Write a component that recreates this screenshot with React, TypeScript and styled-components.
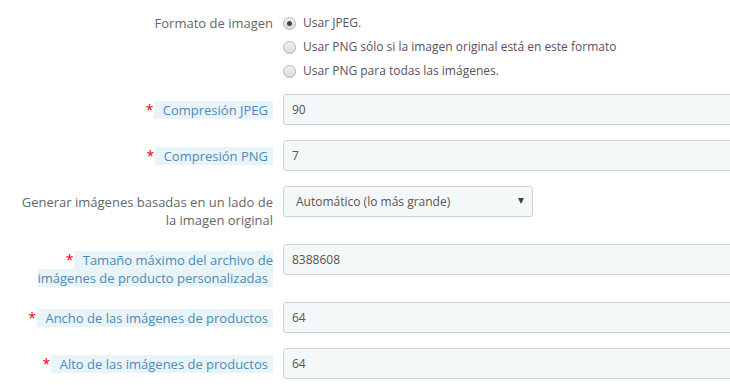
import React from "react";
import styled, { createGlobalStyle } from "styled-components";

const Global = createGlobalStyle`
  html, body { margin: 0; padding: 0; background: #fff; overflow: hidden; }
  body { font-family: "Open Sans", "Liberation Sans", Arial, sans-serif; font-size: 13px; }
  * { box-sizing: border-box; }
`;

const Page = styled.div`
  width: 730px;
  height: 385px;
  padding-top: 7px;
  overflow: hidden;
`;

const FormGroup = styled.div<{ $mb?: number }>`
  display: grid;
  grid-template-columns: 278px 1fr;
  margin-bottom: ${(p) => (p.$mb ?? 15)}px;
`;

const Label = styled.div`
  padding: 7px 5px 0 15px;
  text-align: right;
  line-height: 18px;
  color: #666;
  font-size: 13px;
`;

const Required = styled.span`
  color: #e00;
  font-size: 14px;
  margin-right: 1px;
`;

const Hint = styled.span`
  background: #e9f4f9;
  color: #4a8bba;
  padding: 0 5px;
`;

const Field = styled.div`
  padding-left: 5px;
  min-width: 0;
`;

const Input = styled.input`
  display: block;
  width: 480px;
  height: 31px;
  padding: 0 8px;
  border: 1px solid #c7d6db;
  border-radius: 3px;
  background: #f5f8f9;
  color: #555;
  font-family: inherit;
  font-size: 12px;
  outline: none;
`;

const SelectWrap = styled.div`
  position: relative;
  width: 250px;
`;

const Select = styled.select`
  display: block;
  width: 250px;
  height: 31px;
  padding: 0 24px 0 12px;
  border: 1px solid #c7d6db;
  border-radius: 3px;
  background: #f5f8f9;
  color: #555;
  font-family: inherit;
  font-size: 12px;
  appearance: none;
  -webkit-appearance: none;
  outline: none;
`;

const Caret = styled.span`
  position: absolute;
  right: 9px;
  top: 12px;
  width: 0;
  height: 0;
  border-left: 3.5px solid transparent;
  border-right: 3.5px solid transparent;
  border-top: 6px solid #444;
  pointer-events: none;
`;

const RadioList = styled.div`
  padding-top: 7px;
  display: flex;
  flex-direction: column;
  gap: 6px;
`;

const RadioRow = styled.label`
  display: flex;
  align-items: center;
  height: 18px;
  line-height: 18px;
  color: #5a5060;
  font-size: 12px;
`;

const RadioDot = styled.span<{ $checked?: boolean }>`
  flex: none;
  width: 13px;
  height: 13px;
  border-radius: 50%;
  border: 1px solid #b4b4b4;
  background: linear-gradient(#f2f2f2, #dadada);
  margin-right: 7px;
  display: flex;
  align-items: center;
  justify-content: center;
  &::after {
    content: "";
    display: ${(p) => (p.$checked ? "block" : "none")};
    width: 5px;
    height: 5px;
    border-radius: 50%;
    background: #444;
  }
`;

type Row = { label: string; required?: boolean; value: string };

const textRows: Row[] = [
  { label: "Compresión JPEG", required: true, value: "90" },
  { label: "Compresión PNG", required: true, value: "7" },
];

const lowerRows: Row[] = [
  { label: "Tamaño máximo del archivo de imágenes de producto personalizadas", required: true, value: "8388608" },
  { label: "Ancho de las imágenes de productos", required: true, value: "64" },
  { label: "Alto de las imágenes de productos", required: true, value: "64" },
];

const HintLabel: React.FC<{ text: string; required?: boolean }> = ({ text, required }) => (
  <Label>
    {required && <Required>*</Required>}
    <Hint>{"\u00a0" + text}</Hint>
  </Label>
);

const InputRow: React.FC<{ row: Row }> = ({ row }) => (
  <FormGroup>
    <HintLabel text={row.label} required={row.required} />
    <Field>
      <Input defaultValue={row.value} />
    </Field>
  </FormGroup>
);

export default function App() {
  const radios = [
    { text: "Usar JPEG.", checked: true },
    { text: "Usar PNG sólo si la imagen original está en este formato" },
    { text: "Usar PNG para todas las imágenes." },
  ];
  return (
    <>
      <Global />
      <Page>
        <FormGroup $mb={14}>
          <Label>Formato de imagen</Label>
          <Field>
            <RadioList>
              {radios.map((r) => (
                <RadioRow key={r.text}>
                  <RadioDot $checked={r.checked} />
                  {r.text}
                </RadioRow>
              ))}
            </RadioList>
          </Field>
        </FormGroup>
        {textRows.map((r) => (
          <InputRow key={r.label} row={r} />
        ))}
        <FormGroup>
          <Label>Generar imágenes basadas en un lado de la imagen original</Label>
          <Field>
            <SelectWrap>
              <Select defaultValue="auto">
                <option value="auto">Automático (lo más grande)</option>
                <option value="w">Ancho</option>
                <option value="h">Alto</option>
              </Select>
              <Caret />
            </SelectWrap>
          </Field>
        </FormGroup>
        {lowerRows.map((r) => (
          <InputRow key={r.label} row={r} />
        ))}
      </Page>
    </>
  );
}
